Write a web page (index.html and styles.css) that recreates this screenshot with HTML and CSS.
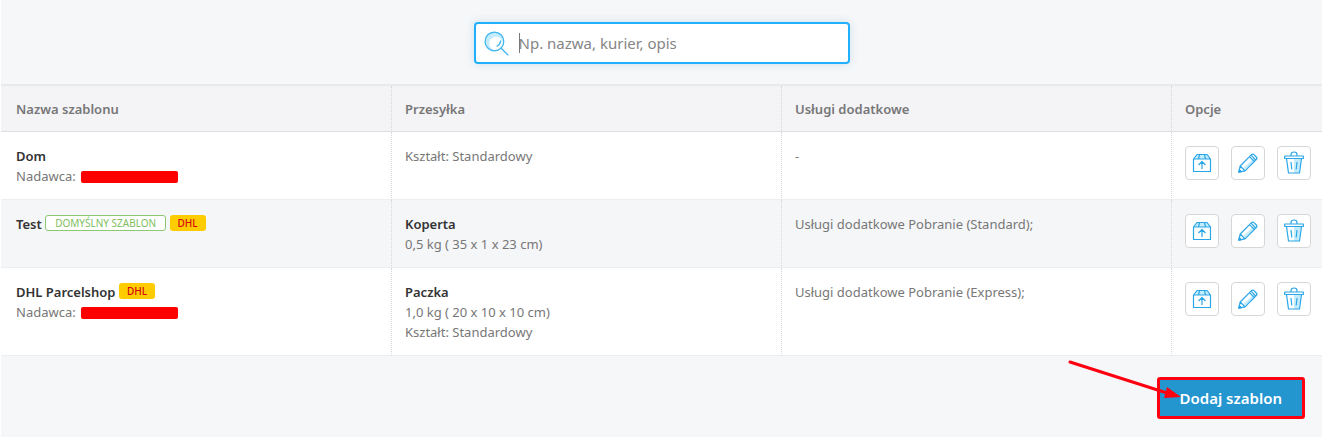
FILE: index.html
```html
<!DOCTYPE html>
<html lang="pl">
<head>
    <meta charset="UTF-8">
    <meta name="viewport" content="width=device-width, initial-scale=1.0">
    <title>Szablony przesyłek</title>
    <link rel="stylesheet" href="styles.css">
</head>
<body>
    <!-- shared icons -->
    <svg class="sprite" aria-hidden="true">
        <symbol id="icon-box" viewBox="0 0 20 20">
            <path class="tint" d="M1.500 6 4.500 1.500h11L18.500 6z"/>
            <path d="M1.500 6v12.500h17V6M1.500 6l3.500-4.500h10L18.500 6zM7.500 1.500 6.500 6M12.500 1.500l1 4.500M10 16V9M6.500 12 10 8.500l3.500 3.500"/>
        </symbol>
        <symbol id="icon-pencil" viewBox="0 0 20 20">
            <path class="tint" d="m3 13 3.500 4L17 7l-2-2z"/>
            <path class="blank" d="M3 13 13 3l2.500 2.500L5 15.500z"/>
            <path d="M.8 19.200 2.200 13 13.500 1.700c.8-.8 1.700-.8 2.500 0l2.300 2.300c.8.8.8 1.700 0 2.500L7 17.800zM2.200 13 7 17.800M11.500 3.700l4.800 4.800M13 2.200l4.800 4.800"/>
            <path class="solid" d="m.8 19.200.6-2.500 1.900 1.900z"/>
        </symbol>
        <symbol id="icon-trash" viewBox="0 0 20 24">
            <path class="tint" d="M10 8h7l-2 14h-5z"/>
            <path d="M.7 5h18.600v2.500H.7zM2.500 7.500 4.500 22h11l2-14.500M7 5V3.500C7 2 8 1 10 1s3 1 3 2.500V5M7 11l.8 7.500M13 11l-.8 7.500"/>
        </symbol>
    </svg>

    <div class="page">
        <form class="search-bar">
            <div class="search">
                <svg class="search-icon" viewBox="0 0 24 24" aria-hidden="true">
                    <circle class="tint" cx="10" cy="10" r="9"/>
                    <circle class="shine" cx="11.500" cy="12" r="6.500"/>
                    <circle cx="10" cy="10" r="9"/>
                    <path d="M12.500 14.500c2-.8 3.200-2.500 3.500-5M16.500 16.500l6.500 6.500"/>
                </svg>
                <span class="caret"></span>
                <input type="text" placeholder="Np. nazwa, kurier, opis" aria-label="Szukaj szablonu">
            </div>
        </form>

        <table class="templates">
            <thead>
                <tr>
                    <th>Nazwa szablonu</th>
                    <th>Przesyłka</th>
                    <th>Usługi dodatkowe</th>
                    <th class="col-options">Opcje</th>
                </tr>
            </thead>
            <tbody>
                <tr>
                    <td><strong>Dom</strong><br>Nadawca: <span class="redacted"></span></td>
                    <td>Kształt: Standardowy</td>
                    <td>-</td>
                    <td>
                        <div class="options">
                            <button type="button" aria-label="Nadaj"><svg class="icon"><use href="#icon-box"/></svg></button>
                            <button type="button" aria-label="Edytuj"><svg class="icon"><use href="#icon-pencil"/></svg></button>
                            <button type="button" aria-label="Usuń"><svg class="icon icon-tall"><use href="#icon-trash"/></svg></button>
                        </div>
                    </td>
                </tr>
                <tr>
                    <td><strong>Test</strong> <span class="badge badge-default">DOMYŚLNY SZABLON</span> <span class="badge badge-dhl">DHL</span></td>
                    <td><strong>Koperta</strong><br>0,5 kg ( 35 x 1 x 23 cm)</td>
                    <td>Usługi dodatkowe Pobranie (Standard);</td>
                    <td>
                        <div class="options">
                            <button type="button" aria-label="Nadaj"><svg class="icon"><use href="#icon-box"/></svg></button>
                            <button type="button" aria-label="Edytuj"><svg class="icon"><use href="#icon-pencil"/></svg></button>
                            <button type="button" aria-label="Usuń"><svg class="icon icon-tall"><use href="#icon-trash"/></svg></button>
                        </div>
                    </td>
                </tr>
                <tr>
                    <td><strong>DHL Parcelshop</strong> <span class="badge badge-dhl">DHL</span><br>Nadawca: <span class="redacted"></span></td>
                    <td><strong>Paczka</strong><br>1,0 kg ( 20 x 10 x 10 cm)<br>Kształt: Standardowy</td>
                    <td>Usługi dodatkowe Pobranie (Express);</td>
                    <td>
                        <div class="options">
                            <button type="button" aria-label="Nadaj"><svg class="icon"><use href="#icon-box"/></svg></button>
                            <button type="button" aria-label="Edytuj"><svg class="icon"><use href="#icon-pencil"/></svg></button>
                            <button type="button" aria-label="Usuń"><svg class="icon icon-tall"><use href="#icon-trash"/></svg></button>
                        </div>
                    </td>
                </tr>
            </tbody>
        </table>

        <div class="footer">
            <div class="add">
                <button type="button" class="add-button">Dodaj szablon</button>
                <svg class="arrow" viewBox="0 0 120 44" aria-hidden="true">
                    <path class="arrow-line" d="M5 5 102 36"/>
                    <path class="arrow-head" d="m102 30 14 10-17 1z"/>
                </svg>
            </div>
        </div>
    </div>
</body>
</html>
```
FILE: styles.css
```css
* {
    box-sizing: border-box;
}
body {
    margin: 0;
    background-color: white;
    color: #777;
    font-family: "Noto Sans", "Open Sans", sans-serif;
    font-size: 13px;
    line-height: 20px;
}
button, input {
    font-family: inherit;
}
.sprite {
    position: absolute;
    width: 0;
    height: 0;
}
.page {
    display: flex;
    flex-direction: column;
    min-height: 100vh;
    margin: 0 3px 0 1px;
    background-color: #f5f7f9;
}

/* search */
.search-bar {
    display: flex;
    justify-content: center;
    padding: 22px 0 20px;
}
.search {
    position: relative;
    width: 376px;
    max-width: 100%;
}
.search input {
    display: block;
    width: 100%;
    height: 42px;
    padding: 0 12px 0 43px;
    border: 2px solid #21b0fe;
    border-radius: 4px;
    background-color: white;
    box-shadow: 0 0 8px #cfdfeb;
    font-size: 15px;
    outline: none;
}
.search input::placeholder {
    color: #858585;
    opacity: 1;
}
.search-icon {
    position: absolute;
    left: 10px;
    top: 9px;
    width: 25px;
    height: 25px;
    fill: none;
    stroke: #3fb4ee;
    stroke-width: 1.2;
    stroke-linecap: round;
}
.search-icon .shine {
    fill: white;
    stroke: none;
}
.caret {
    position: absolute;
    left: 45px;
    top: 11px;
    width: 1px;
    height: 20px;
    background-color: #777;
}
.tint {
    fill: #c4ecfd;
    stroke: none;
}

/* table */
.templates {
    width: 100%;
    table-layout: fixed;
    border-collapse: separate;
    border-spacing: 0;
    border-top: 2px solid #e7e9eb;
}
.templates th {
    height: 46px;
    padding: 0 13px;
    border-bottom: 1px solid #dcdee1;
    background-color: #f4f4f7;
    color: #777;
    font-weight: 600;
    text-align: left;
}
.templates td {
    padding: 14px 13px 13px;
    border-bottom: 1px solid #eceef0;
    background-color: white;
    vertical-align: top;
}
.templates tr:nth-child(even) td {
    background-color: #f5f6f8;
}
.templates th + th, .templates td + td {
    border-left: 1px dotted #d5d8da;
}
.templates th:first-child, .templates td:first-child {
    padding-left: 15px;
}
.templates .col-options {
    width: 151px;
}
.templates strong {
    color: #333;
    font-weight: 600;
}
.redacted {
    display: inline-block;
    width: 97px;
    height: 12px;
    margin-left: 2px;
    border-radius: 2px;
    background-color: red;
    vertical-align: -2px;
}
.badge {
    display: inline-block;
    height: 16px;
    padding: 0 8px;
    border-radius: 3px;
    font-size: 10px;
    line-height: 16px;
    vertical-align: 2px;
}
.badge-default {
    padding: 0 9px;
    border: 1px solid #8cc86e;
    background-color: white;
    color: #7dbd5d;
    line-height: 14px;
}
.badge-dhl {
    background-color: #fc0;
    color: #d40511;
    font-weight: 500;
}

/* row buttons */
.options {
    display: flex;
    gap: 12px;
}
.options button {
    display: flex;
    align-items: center;
    justify-content: center;
    flex: none;
    width: 34px;
    height: 34px;
    padding: 0;
    border: 1px solid #d5d7d9;
    border-radius: 4px;
    background-color: white;
    cursor: pointer;
}
.icon {
    width: 20px;
    height: 20px;
    fill: none;
    stroke: #2ba6e6;
    stroke-width: 1.2;
    stroke-linejoin: round;
}
.icon-tall {
    height: 24px;
}
.solid {
    fill: #2ba6e6;
}
.blank {
    fill: white;
    stroke: none;
}

/* footer */
.footer {
    display: flex;
    justify-content: flex-end;
    padding: 21px 17px 17px;
}
.add {
    position: relative;
}
.add-button {
    display: block;
    height: 42px;
    padding: 0 20px;
    border: 3px solid #fe0010;
    border-radius: 3px;
    background-color: #2395cf;
    color: white;
    font-size: 15px;
    font-weight: 600;
    cursor: pointer;
}
.arrow {
    position: absolute;
    left: -92px;
    top: -20px;
    width: 120px;
    height: 44px;
    fill: #fe0010;
    pointer-events: none;
}
.arrow-line {
    stroke: #fe0010;
    stroke-width: 3;
    stroke-linecap: round;
}
```
